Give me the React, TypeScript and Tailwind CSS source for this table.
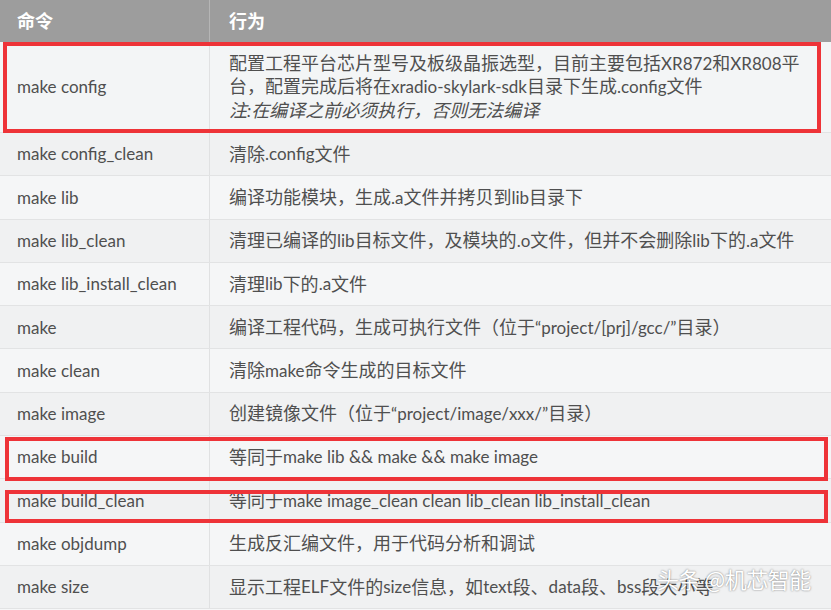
import React from 'react';

type Row = { cmd: string; desc: string };

// CJK runs render a bit larger than the Latin text in the screenshot
const cjk = /([\u3000-\u303f\u4e00-\u9fff\uff00-\uffef]+)/;
const mix = (s: string) =>
  s.split(cjk).map((p, i) =>
    cjk.test(p) ? (
      <span key={i} className="text-[18px]">
        {p}
      </span>
    ) : (
      <React.Fragment key={i}>{p}</React.Fragment>
    )
  );

const rows: Row[] = [
  { cmd: 'make config_clean', desc: '清除.config文件' },
  { cmd: 'make lib', desc: '编译功能模块，生成.a文件并拷贝到lib目录下' },
  { cmd: 'make lib_clean', desc: '清理已编译的lib目标文件，及模块的.o文件，但并不会删除lib下的.a文件' },
  { cmd: 'make lib_install_clean', desc: '清理lib下的.a文件' },
  { cmd: 'make', desc: '编译工程代码，生成可执行文件（位于“project/[prj]/gcc/”目录）' },
  { cmd: 'make clean', desc: '清除make命令生成的目标文件' },
  { cmd: 'make image', desc: '创建镜像文件（位于“project/image/xxx/”目录）' },
  { cmd: 'make build', desc: '等同于make lib && make && make image' },
  { cmd: 'make build_clean', desc: '等同于make image_clean clean lib_clean lib_install_clean' },
  { cmd: 'make objdump', desc: '生成反汇编文件，用于代码分析和调试' },
  { cmd: 'make size', desc: '显示工程ELF文件的size信息，如text段、data段、bss段大小等' },
];

export default function App() {
  return (
    <div className="relative w-[831px] h-[610px] overflow-hidden bg-[#f6f7f8] font-['Lato','Noto_Sans_CJK_SC',sans-serif] text-[17px] text-[#4f4f4f]">
      {/* header */}
      <div className="flex h-[42px] bg-[#9d9d9d] text-white font-bold">
        <div className="w-[210px] flex items-center pl-[17px] border-r border-[#b5b5b5]">{mix('命令')}</div>
        <div className="flex-1 flex items-center pl-[19px]">{mix('行为')}</div>
      </div>

      {/* make config */}
      <div className="flex h-[91px] bg-[#f3f5f6] border-b border-[#e2e3e4]">
        <div className="w-[210px] flex items-center pl-[17px] border-r border-[#e0e1e2]">make config</div>
        <div className="flex-1 flex flex-col justify-center pl-[19px] leading-[22.5px] whitespace-nowrap">
          <div>{mix('配置工程平台芯片型号及板级晶振选型，目前主要包括XR872和XR808平')}</div>
          <div>{mix('台，配置完成后将在xradio-skylark-sdk目录下生成.config文件')}</div>
          <div className="italic">{mix('注:在编译之前必须执行，否则无法编译')}</div>
        </div>
      </div>

      {rows.map((r, i) => (
        <div
          key={r.cmd}
          className={`flex h-[43.3px] border-b border-[#e2e3e4] ${i % 2 === 0 ? 'bg-[#f0f1f2]' : 'bg-[#f5f6f7]'}`}
        >
          <div className="w-[210px] flex items-center pl-[17px] border-r border-[#e0e1e2]">{r.cmd}</div>
          <div className="flex-1 flex items-center pl-[19px] whitespace-nowrap">{mix(r.desc)}</div>
        </div>
      ))}

      {/* red annotation boxes */}
      <div className="absolute left-[3px] top-[42px] w-[818px] h-[91px] border-[4px] border-[#ee3338]" />
      <div className="absolute left-[5px] top-[437px] w-[823px] h-[44px] border-[4px] border-[#ee3338]" />
      <div className="absolute left-[5px] top-[490px] w-[823px] h-[33px] border-[4px] border-[#ee3338]" />

      {/* watermark */}
      <div className="absolute left-[657px] top-[563px] whitespace-nowrap text-white text-[22px] leading-[30px] tracking-[-0.5px] font-['Noto_Sans_CJK_SC',sans-serif] [text-shadow:0_0_2px_rgba(0,0,0,0.55)]">
        头条 @机芯智能
      </div>
    </div>
  );
}
